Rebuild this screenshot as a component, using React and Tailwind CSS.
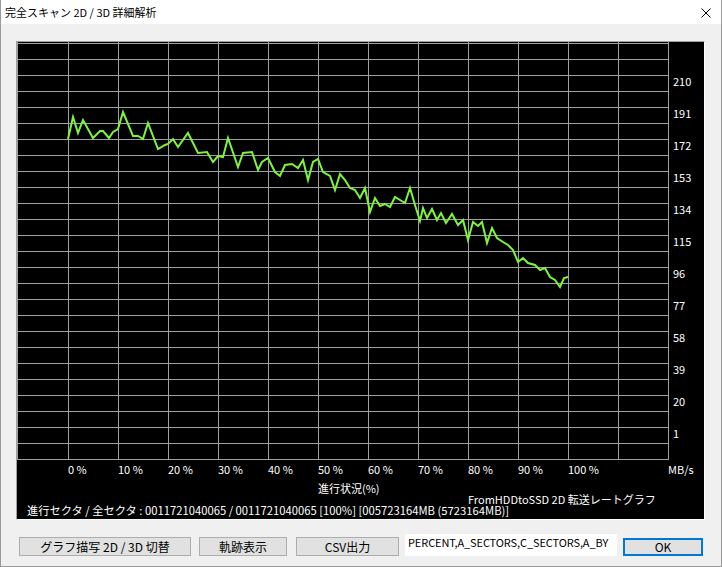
import React from "react";

const curve = [
  [68, 139], [73, 117], [78, 133], [83, 120], [93, 138], [100, 131], [103, 131], [109, 138],
  [113, 132], [118, 129], [123, 112], [133, 136], [138, 136], [143, 139], [148, 123],
  [158, 149], [165, 145], [168, 144], [173, 139], [178, 147], [188, 133], [198, 153],
  [207, 152], [213, 162], [218, 156], [223, 157], [228, 138], [238, 167], [243, 153],
  [252, 152], [258, 170], [262, 162], [268, 158], [275, 172], [280, 176], [285, 165],
  [292, 164], [298, 168], [303, 160], [308, 180], [313, 162], [318, 159], [323, 172],
  [330, 176], [335, 190], [340, 174], [345, 180], [350, 188], [355, 190], [360, 198],
  [365, 188], [370, 212], [375, 198], [380, 206], [385, 204], [390, 207], [395, 197],
  [400, 200], [405, 203], [410, 188], [415, 205], [420, 221], [423, 208], [427, 218],
  [432, 209], [437, 220], [441, 213], [446, 223], [452, 214], [458, 225], [463, 220],
  [468, 240], [473, 222], [478, 226], [482, 222], [487, 243], [492, 228], [497, 238],
  [503, 242], [508, 245], [513, 250], [518, 262], [523, 258], [528, 263], [535, 265],
  [540, 270], [545, 268], [550, 277], [555, 280], [560, 287], [564, 278], [568, 277],
];

const yLabels = [210, 191, 172, 153, 134, 115, 96, 77, 58, 39, 20, 1];
const xLabels = ["0 %", "10 %", "20 %", "30 %", "40 %", "50 %", "60 %", "70 %", "80 %", "90 %", "100 %"];

const font = "'Noto Sans CJK JP', 'Liberation Sans', sans-serif";

function Chart() {
  const hLines = [];
  for (let k = 0; k <= 26; k++) hLines.push(43 + 16 * k);
  const vLines = [17];
  for (let k = 0; k <= 12; k++) vLines.push(68 + 50 * k);
  return (
    <svg width="687" height="441" viewBox="17 42 687 441" className="block">
      {hLines.map((y) => (
        <line key={"h" + y} x1="17" x2="669" y1={y + 0.5} y2={y + 0.5} stroke="#a0a0a0" strokeWidth="1" />
      ))}
      {vLines.map((x) => (
        <line key={"v" + x} x1={x + 0.5} x2={x + 0.5} y1="42" y2="460" stroke="#a0a0a0" strokeWidth="1" />
      ))}
      <polyline
        points={curve.map((p) => p.join(",")).join(" ")}
        fill="none"
        stroke="#7cf53a"
        strokeWidth="2"
        strokeLinejoin="miter"
      />
      {yLabels.map((v, i) => (
        <text key={v} x="673" y={75 + 32 * i + 11} fill="#fff" fontSize="11" fontFamily={font}>
          {v}
        </text>
      ))}
      {xLabels.map((t, i) => (
        <text key={t} x={68 + 50 * i} y="473.5" fill="#fff" fontSize="11" fontFamily={font}>
          {t}
        </text>
      ))}
      <text x="668" y="473.5" fill="#fff" fontSize="11" fontFamily={font}>
        MB/s
      </text>
    </svg>
  );
}

export default function App() {
  return (
    <div
      className="w-[722px] h-[567px] bg-[#f0f0f0] border-l border-r border-b border-[#9a9a9a] flex flex-col overflow-hidden"
      style={{ fontFamily: font }}
    >
      <div className="h-[24px] bg-white flex items-center justify-between pl-[4px] pr-[10px] shrink-0">
        <span className="text-[11px] text-black leading-none">完全スキャン 2D / 3D 詳細解析</span>
        <svg width="10" height="10" viewBox="0 0 10 10" className="mt-[2px]">
          <path d="M0.5 0.5 L9.5 9.5 M9.5 0.5 L0.5 9.5" stroke="#000" strokeWidth="1" />
        </svg>
      </div>
      <div className="ml-[15px] mt-[17px] w-[689px] h-[479px] border-t border-l border-t-[#a0a0a0] border-l-[#a0a0a0] border-b border-r border-b-white border-r-white bg-black flex flex-col shrink-0">
        <Chart />
        <div className="h-[11px] leading-[11px] text-[11px] text-white pl-[301px] whitespace-nowrap">進行状況(%)</div>
        <div className="h-[11px] leading-[11px] text-[11px] text-white pl-[451px] whitespace-nowrap">
          FromHDDtoSSD 2D 転送レートグラフ
        </div>
        <div className="h-[11px] leading-[11px] text-[11.25px] text-white pl-[10px] whitespace-nowrap">
          進行セクタ / 全セクタ : 0011721040065 / 0011721040065 [100%] [005723164MB (5723164MB)]
        </div>
      </div>
      <div className="flex items-start mt-[14px] ml-[18px] shrink-0">
        <button className="mt-[3px] w-[172px] h-[19px] bg-[#e1e1e1] border border-[#adadad] text-[12px] leading-none text-black">
          グラフ描写 2D / 3D 切替
        </button>
        <button className="mt-[3px] ml-[8px] w-[88px] h-[19px] bg-[#e1e1e1] border border-[#adadad] text-[12px] leading-none text-black">
          軌跡表示
        </button>
        <button className="mt-[3px] ml-[9px] w-[103px] h-[19px] bg-[#e1e1e1] border border-[#adadad] text-[12px] leading-none text-black">
          CSV出力
        </button>
        <div className="ml-[6px] w-[212px] h-[22px] bg-white overflow-hidden pl-[3px]">
          <div className="w-[207px] overflow-hidden whitespace-nowrap text-[11px] tracking-[-0.1px] leading-[16px] text-black">
            PERCENT,A_SECTORS,C_SECTORS,A_BY
          </div>
        </div>
        <button className="mt-[4px] ml-[6px] w-[80px] h-[18px] bg-[#e1e1e1] border-2 border-[#0078d7] text-[12px] leading-none text-black">
          OK
        </button>
      </div>
    </div>
  );
}
